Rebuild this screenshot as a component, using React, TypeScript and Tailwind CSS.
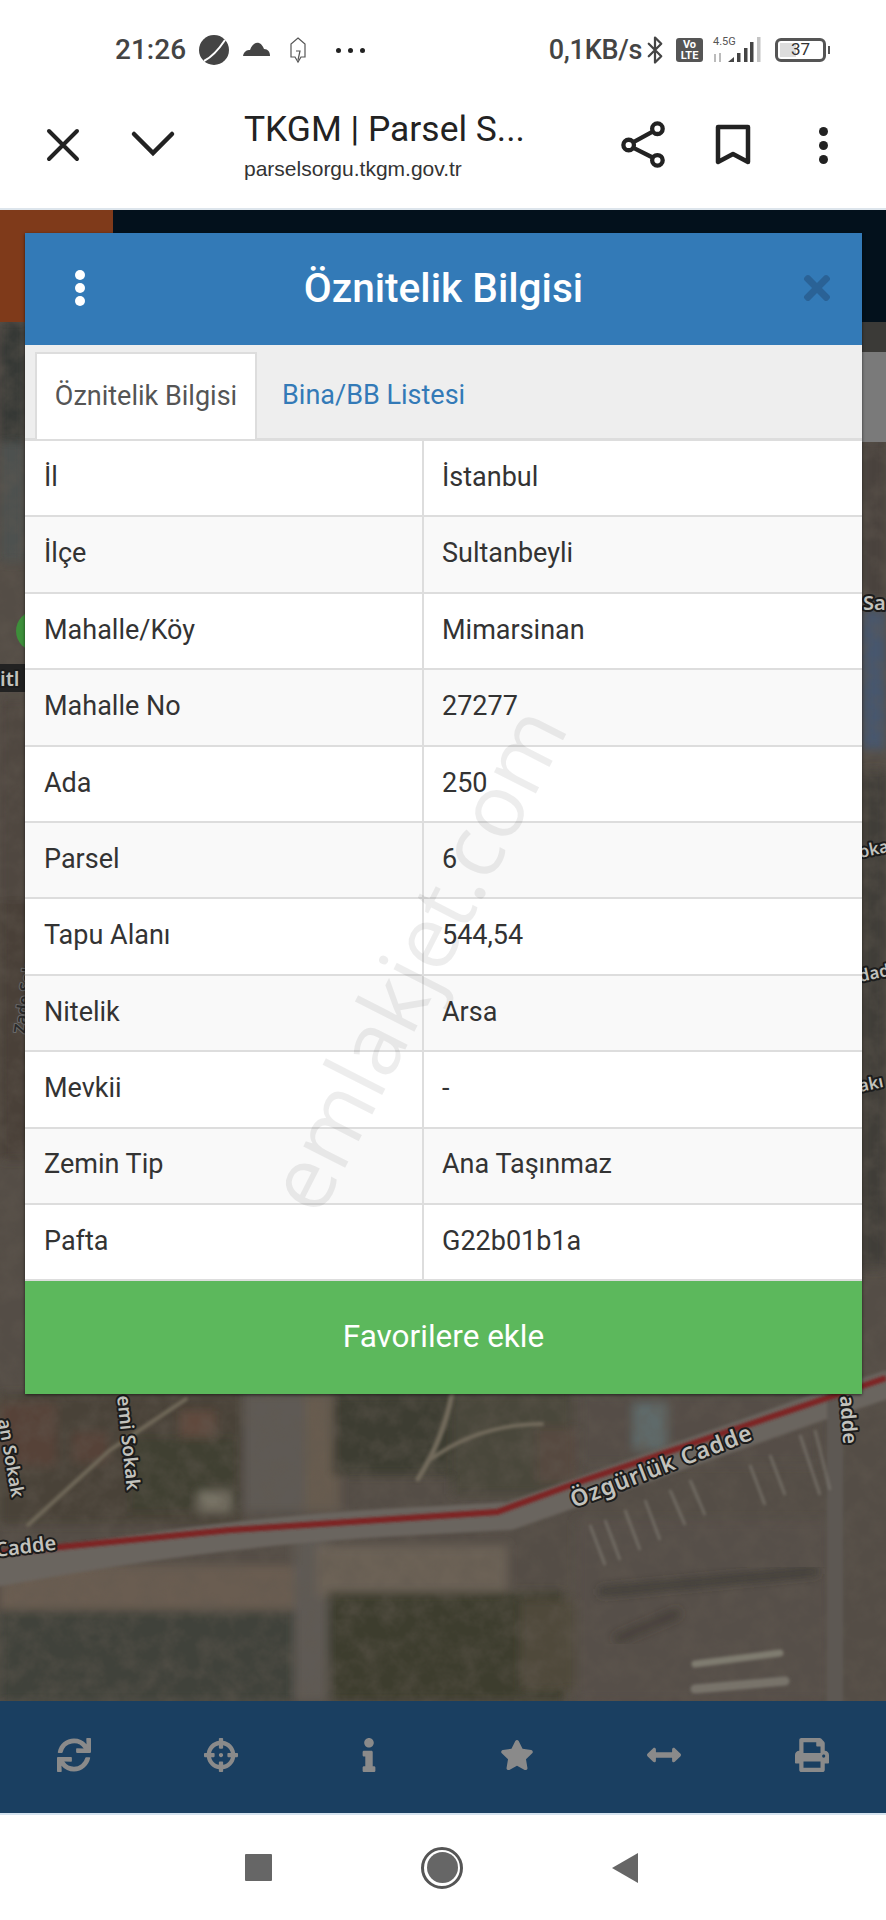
import { Bluetooth } from "lucide-react";
import { FaSync, FaCrosshairs, FaInfo, FaStar, FaArrowsAltH, FaPrint, FaTimes } from "react-icons/fa";

const rows = [
  ["İl", "İstanbul"],
  ["İlçe", "Sultanbeyli"],
  ["Mahalle/Köy", "Mimarsinan"],
  ["Mahalle No", "27277"],
  ["Ada", "250"],
  ["Parsel", "6"],
  ["Tapu Alanı", "544,54"],
  ["Nitelik", "Arsa"],
  ["Mevkii", "-"],
  ["Zemin Tip", "Ana Taşınmaz"],
  ["Pafta", "G22b01b1a"],
];

const bottomIcons = [FaSync, FaCrosshairs, FaInfo, FaStar, FaArrowsAltH, FaPrint];

function StatusBar() {
  return (
    <div className="h-[82px] pt-[18px] pl-[115px] pr-[56px] flex items-start justify-between bg-white text-[#444]">
      <div className="h-[64px] flex items-center">
        <span className="text-[28px] font-medium">21:26</span>
        <svg width="32" height="32" viewBox="0 0 32 32" className="ml-[12px]">
          <circle cx="16" cy="16" r="15" fill="#444" />
          <path d="M6 27 C14 23 21 15 27 6" stroke="#fff" strokeWidth="2" fill="none" />
        </svg>
        <svg width="28" height="16" viewBox="0 0 28 16" className="ml-[13px] -mt-[2px]">
          <path d="M0 15 C1 10 4 9 7 9 C9 3 13 1 16 2 C19 3 20 6 21 8 C25 8 27 11 27 15 Z" fill="#444" />
        </svg>
        <svg width="18" height="27" viewBox="0 0 18 27" className="ml-[18px]" fill="none" stroke="#555" strokeWidth="1.2">
          <path d="M9 1 L16 7 V20 H12 L9 25 L6 20 H2 V7 Z" />
          <path d="M7 14 H11 L9 23" />
        </svg>
        <span className="ml-[29px] flex gap-[7px]">
          <i className="w-[5px] h-[5px] rounded-full bg-[#222]" />
          <i className="w-[5px] h-[5px] rounded-full bg-[#222]" />
          <i className="w-[5px] h-[5px] rounded-full bg-[#222]" />
        </span>
      </div>
      <div className="h-[64px] flex items-center">
        <span className="text-[27px] font-medium tracking-[-0.3px]">0,1KB/s</span>
        <Bluetooth size={30} strokeWidth={1.8} className="-ml-[2px]" />
        <div className="ml-[6px] w-[27px] h-[24px] rounded-[3px] bg-[#555] text-white text-[11px] leading-[11px] font-bold text-center pt-[1px]">
          <div>Vo</div>
          <div>LTE</div>
        </div>
        <div className="ml-[10px] w-[50px] h-[26px] relative">
          <span className="absolute left-0 -top-[1px] text-[11px] leading-[12px] text-[#555]">4.5G</span>
          <svg width="50" height="26" viewBox="0 0 50 26" className="absolute inset-0">
            <path d="M2 17 V25 M7 16 V25" stroke="#bbb" strokeWidth="2" />
            <path d="M15 25 L21 20 V25 Z" fill="#444" />
            <rect x="24" y="16" width="3.5" height="9" fill="#444" />
            <rect x="31" y="11" width="3.5" height="14" fill="#444" />
            <rect x="37" y="5" width="3.5" height="20" fill="#444" />
            <rect x="44" y="0" width="3.5" height="25" fill="#c4c4c4" />
          </svg>
        </div>
        <div className="ml-[12px] w-[51px] h-[24px] border-[3px] border-[#555] rounded-[6px] relative flex items-center justify-center overflow-hidden">
          <div className="absolute left-[2px] top-[2px] bottom-[2px] w-[16px] bg-[#ddd]" />
          <span className="relative text-[17px] text-[#333]">37</span>
        </div>
        <div className="ml-[2px] w-[2px] h-[8px] bg-[#555]" />
      </div>
    </div>
  );
}

function BrowserBar() {
  return (
    <div className="h-[128px] flex items-center bg-white border-b-2 border-[#dde5ec] text-[#222]">
      <svg width="46" height="46" viewBox="0 0 46 46" className="ml-[40px]" fill="none" stroke="#222" strokeWidth="4" strokeLinecap="round">
        <path d="M9 9 L37 37 M37 9 L9 37" />
      </svg>
      <svg width="46" height="46" viewBox="0 0 46 46" className="ml-[44px] -mt-[2px]" fill="none" stroke="#222" strokeWidth="4.5" strokeLinecap="round">
        <path d="M4 13 L23 32 L42 13" />
      </svg>
      <div className="ml-[68px] w-[290px] flex flex-col">
        <div className="text-[35.4px] leading-[44px] text-[#222] whitespace-nowrap">TKGM | Parsel S...</div>
        <div className="mt-[4px] text-[21px] leading-[28px] text-[#333] [font-family:'Liberation_Sans',sans-serif]">parselsorgu.tkgm.gov.tr</div>
      </div>
      <svg width="46" height="50" viewBox="0 0 48 50" className="ml-[87px]" fill="none" stroke="#222" strokeWidth="4.5">
        <circle cx="38" cy="8" r="5.5" />
        <circle cx="38" cy="41" r="5.5" />
        <circle cx="8" cy="25" r="5.5" />
        <path d="M33 11 L13 22 M33 38 L13 28" />
      </svg>
      <svg width="36" height="42" viewBox="0 0 36 42" className="ml-[48px]" fill="none" stroke="#222" strokeWidth="4.5">
        <path d="M3 3 H33 V38 L18 30 L3 38 Z" strokeLinejoin="round" />
      </svg>
      <div className="ml-[68px] flex flex-col gap-[5px]">
        <i className="w-[9px] h-[9px] rounded-full bg-[#222]" />
        <i className="w-[9px] h-[9px] rounded-full bg-[#222]" />
        <i className="w-[9px] h-[9px] rounded-full bg-[#222]" />
      </div>
    </div>
  );
}

function MapDrawing() {
  return (
    <svg viewBox="0 210 886 1491" width="886" height="1491" className="absolute inset-0" preserveAspectRatio="none">
      <defs>
        <filter id="soft" x="-5%" y="-5%" width="110%" height="110%">
          <feGaussianBlur stdDeviation="5" />
        </filter>
        <filter id="softer" x="-5%" y="-5%" width="110%" height="110%">
          <feGaussianBlur stdDeviation="1.4" />
        </filter>
        <filter id="grain">
          <feTurbulence type="fractalNoise" baseFrequency="0.05" numOctaves="4" seed="7" />
          <feColorMatrix values="0 0 0 0 0.12  0 0 0 0 0.1  0 0 0 0 0.08  1.2 0 0 0 -0.42" />
        </filter>
      </defs>
      <rect x="0" y="210" width="886" height="1491" fill="#544d46" />
      <g filter="url(#soft)">
        <rect x="0" y="322" width="25" height="120" fill="#343935" />
        <rect x="0" y="442" width="25" height="120" fill="#4d5150" />
        <rect x="0" y="700" width="30" height="200" fill="#4f4741" />
        <rect x="0" y="900" width="30" height="260" fill="#4a4039" />
        <rect x="862" y="440" width="24" height="160" fill="#48433e" />
        <rect x="862" y="610" width="24" height="140" fill="#46566e" />
        <rect x="862" y="770" width="24" height="500" fill="#3f3d38" />
        <rect x="0" y="1394" width="243" height="130" fill="#4a4339" />
        <rect x="0" y="1403" width="56" height="63" fill="#574339" />
        <rect x="73" y="1432" width="34" height="30" fill="#564238" />
        <rect x="180" y="1411" width="35" height="26" fill="#604a3e" />
        <rect x="130" y="1437" width="107" height="75" fill="#3f3f33" />
        <rect x="198" y="1491" width="33" height="21" fill="#777265" />
        <rect x="243" y="1394" width="62" height="118" fill="#5e5a55" />
        <rect x="305" y="1394" width="35" height="118" fill="#675c4f" />
        <rect x="333" y="1394" width="119" height="81" fill="#3d3d31" />
        <rect x="452" y="1394" width="120" height="100" fill="#48473b" />
        <rect x="537" y="1428" width="39" height="55" fill="#574a3f" />
        <rect x="580" y="1394" width="240" height="70" fill="#544e47" />
        <rect x="633" y="1403" width="34" height="47" fill="#5f6a6a" />
        <rect x="0" y="1565" width="294" height="48" fill="#6a5d51" />
        <rect x="0" y="1610" width="294" height="91" fill="#40433a" />
        <rect x="294" y="1530" width="34" height="171" fill="#5e5a54" />
        <rect x="316" y="1545" width="192" height="52" fill="#6c6256" />
        <rect x="328" y="1592" width="237" height="109" fill="#3d3c2e" />
        <rect x="520" y="1600" width="55" height="90" fill="#504a3a" />
        <rect x="576" y="1520" width="254" height="181" fill="#564f48" />
      </g>
      <g filter="url(#grain)" opacity="0.7">
        <rect x="0" y="322" width="886" height="1379" />
      </g>
      <g filter="url(#soft)" fill="none">
        <path d="M599 1592 L819 1571" stroke="#35332d" strokeWidth="8" opacity="0.7" />
        <path d="M615 1640 L680 1612" stroke="#35332d" strokeWidth="9" opacity="0.6" />
      </g>
      <g filter="url(#softer)" fill="none" strokeLinecap="round">
        <path d="M0 1572 C120 1550 250 1530 400 1522 L510 1516 L819 1407 L886 1385" stroke="#6a655e" strokeWidth="28" />
        <path d="M28 1525 L110 1450 L186 1399" stroke="#6f6858" strokeWidth="4" />
        <path d="M452 1394 C445 1430 430 1460 418 1479" stroke="#726b5c" strokeWidth="5" />
        <path d="M430 1460 C470 1430 510 1424 542 1424" stroke="#726b5c" strokeWidth="4" />
        <path d="M835 1394 V1701" stroke="#5d5953" strokeWidth="16" />
        <path d="M695 1664 L780 1653" stroke="#7f7b70" strokeWidth="7" />
        <path d="M695 1689 L785 1681" stroke="#78736b" strokeWidth="9" />
      </g>
      <g stroke="#87837a" strokeWidth="2.5" opacity="0.6" filter="url(#softer)">
        <path d="M590 1525 L605 1565 M605 1520 L620 1560 M625 1510 L640 1550 M645 1500 L660 1540 M670 1490 L685 1525 M690 1480 L705 1515 M750 1465 L765 1505 M770 1455 L785 1495 M800 1435 L820 1495 M815 1430 L830 1490" />
      </g>
      <path d="M0 1553 L230 1530 L497 1512 L582 1481 L886 1378" fill="none" stroke="#7e2424" strokeWidth="6" filter="url(#softer)" />
      <circle cx="36" cy="631" r="20" fill="#3d8f3a" />
      <g fontFamily="'Noto Sans',sans-serif" fontWeight="600" fill="#c2c2bd" stroke="#1c1c1c" strokeWidth="4" paintOrder="stroke" strokeLinejoin="round" fontSize="20">
        <rect x="0" y="664" width="25" height="28" fill="#222" stroke="none" />
        <text x="0" y="686">itl</text>
        <text x="0" y="0" fontSize="16" transform="translate(25 1034) rotate(-82)" fill="#2a2a2a" stroke="#6a6a6a" strokeWidth="2">Zade Sok</text>
        <text x="863" y="610">Sa</text>
        <text x="0" y="0" fontSize="17" transform="translate(860 858) rotate(-12)">oka</text>
        <text x="0" y="0" fontSize="17" transform="translate(860 982) rotate(-12)">dad</text>
        <text x="0" y="0" fontSize="17" transform="translate(860 1092) rotate(-12)">akı</text>
        <text x="0" y="0" transform="translate(574 1508) rotate(-21)" fontSize="23" letterSpacing="1">Özgürlük Cadde</text>
        <text x="0" y="0" transform="translate(117 1396) rotate(84)" fontSize="19">emi Sokak</text>
        <text x="0" y="0" transform="translate(-4 1557) rotate(-7)" fontSize="20">Cadde</text>
        <text x="0" y="0" transform="translate(840 1396) rotate(86)" fontSize="20">adde</text>
        <text x="0" y="0" transform="translate(-2 1420) rotate(80)" fontSize="18">an Sokak</text>
      </g>
      <rect x="0" y="210" width="113" height="112" fill="#7f3a1a" />
      <rect x="113" y="210" width="773" height="112" fill="#03111c" />
      <rect x="862" y="322" width="24" height="30" fill="#3b3a37" />
      <rect x="862" y="352" width="24" height="90" fill="#7a7a7a" />
    </svg>
  );
}

function AttributeModal() {
  return (
    <div className="relative w-[837px] ml-[25px] mt-[23px] shadow-[0_1px_3px_rgba(0,0,0,0.6)]">
      <div className="h-[112px] bg-[#337ab7] relative flex items-center justify-center">
        <div className="absolute left-[50px] top-[37px] flex flex-col gap-[3px]">
          <i className="w-[10px] h-[10px] rounded-full bg-white" />
          <i className="w-[10px] h-[10px] rounded-full bg-white" />
          <i className="w-[10px] h-[10px] rounded-full bg-white" />
        </div>
        <h1 className="text-[40.6px] font-medium text-white -mt-[2px]">Öznitelik Bilgisi</h1>
        <FaTimes className="absolute right-[26px] top-[36px] text-[#2a6296]" size={38} />
      </div>
      <div className="h-[96px] bg-[#eee] border-b-[3px] border-[#ddd] pl-[10px] pt-[7px] flex">
        <div className="h-[87px] w-[222px] bg-white border-2 border-b-0 border-[#ddd] flex items-center justify-center text-[27px] text-[#555]">
          Öznitelik Bilgisi
        </div>
        <div className="h-[87px] ml-[25px] flex items-center text-[27px] text-[#337ab7]">
          Bina/BB Listesi
        </div>
      </div>
      <div className="bg-white text-[27px] text-[#333]">
        {rows.map(([label, value], index) => (
          <div
            key={label}
            className={`h-[76.4px] flex border-b-2 border-[#ddd] ${index % 2 === 1 ? "bg-[#f9f9f9]" : "bg-white"}`}
          >
            <div className="w-[399px] pl-[19px] pb-[2px] flex items-center border-r-2 border-[#ddd]">{label}</div>
            <div className="flex-1 pl-[18px] pb-[2px] flex items-center">{value}</div>
          </div>
        ))}
      </div>
      <div className="h-[113px] bg-[#5cb85c] flex items-center justify-center text-white text-[31.5px] pb-[2px]">
        Favorilere ekle
      </div>
      <div className="absolute left-[264px] top-[904px] text-[88px] text-black/[0.07] whitespace-nowrap origin-left -rotate-[63deg] pointer-events-none [font-family:'Open_Sans',sans-serif]">
        emlakjet.com
      </div>
    </div>
  );
}

function BottomTools() {
  return (
    <div className="h-[112px] bg-[#1a3f61] grid grid-cols-6 items-center pb-[4px]">
      {bottomIcons.map((Icon, i) => (
        <div key={i} className="flex justify-center text-[#8a8a8a]">
          <Icon size={34} />
        </div>
      ))}
    </div>
  );
}

function NavBar() {
  return (
    <div className="h-[107px] bg-white border-t-2 border-[#d5e3ef] relative flex items-center">
      <div className="ml-[245px] w-[27px] h-[27px] bg-[#666] rounded-[1px]" />
      <div className="ml-[149px] w-[42px] h-[42px] rounded-full border-[3px] border-[#555] flex items-center justify-center">
        <div className="w-[31px] h-[31px] rounded-full bg-[#666]" />
      </div>
      <svg width="28" height="30" viewBox="0 0 28 30" className="ml-[148px]">
        <path d="M27 0 V30 L1 15 Z" fill="#666" />
      </svg>
    </div>
  );
}

export default function App() {
  return (
    <div className="w-[886px] h-[1920px] flex flex-col overflow-hidden bg-white [font-family:Roboto,sans-serif]">
      <StatusBar />
      <BrowserBar />
      <div className="relative h-[1491px] overflow-hidden">
        <MapDrawing />
        <AttributeModal />
      </div>
      <BottomTools />
      <NavBar />
    </div>
  );
}
